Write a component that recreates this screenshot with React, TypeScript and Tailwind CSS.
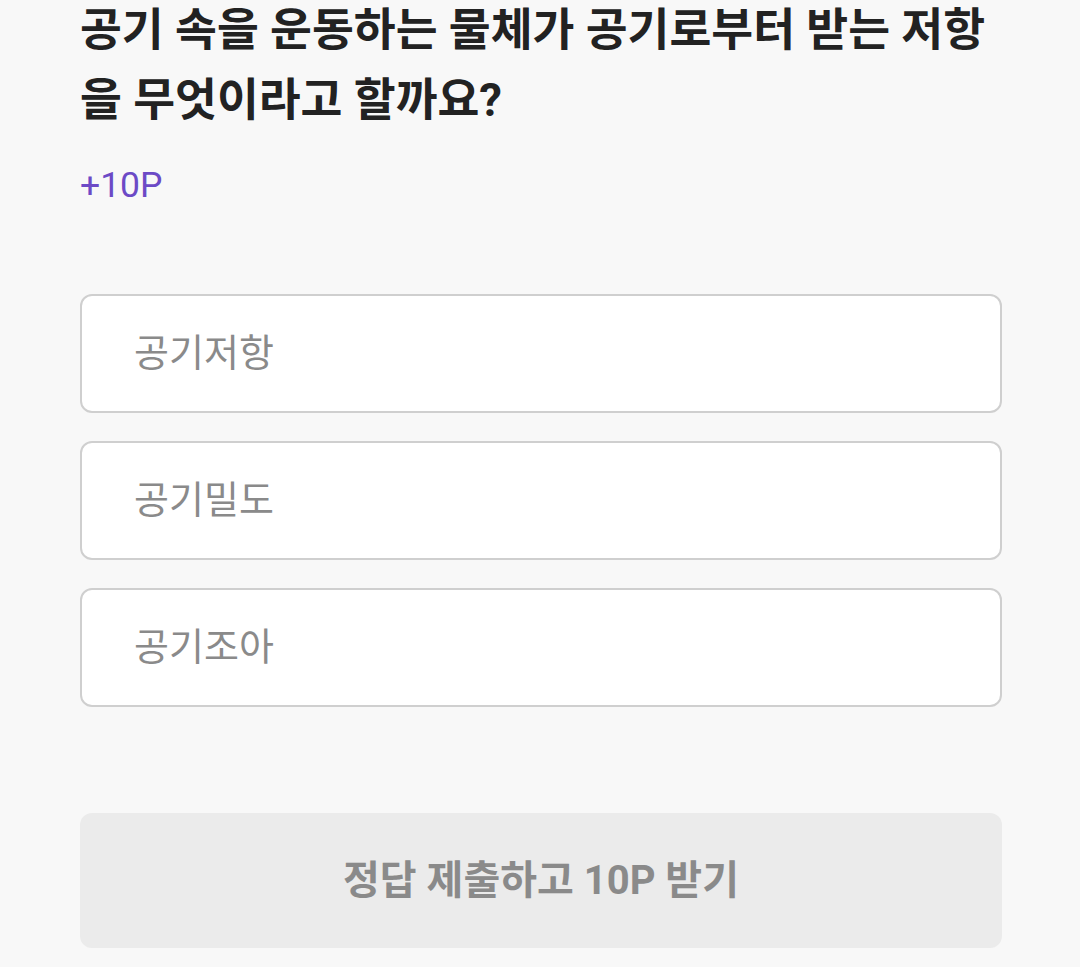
import { useState } from 'react';

const options = ['공기저항', '공기밀도', '공기조아'];

export default function App() {
  const [selected, setSelected] = useState<number | null>(null);

  return (
    <div
      className="min-h-screen w-full bg-[#f8f8f8] pl-[80px] pr-[78px] pb-5"
      style={{ fontFamily: 'Roboto, "Noto Sans CJK KR", sans-serif' }}
    >
      {/* Question */}
      <h1 className="-mt-[4px] text-[45.5px] font-bold leading-[70px] text-[#222222]">
        공기 속을 운동하는 물체가 공기로부터 받는 저항을 무엇이라고 할까요?
      </h1>
      <p className="mt-[25px] text-[35.5px] leading-[48px] text-[#6c4ac6]">+10P</p>

      {/* Choices */}
      <div className="mt-[85px] flex flex-col gap-[28px]">
        {options.map((opt, i) => (
          <button
            key={opt}
            type="button"
            onClick={() => setSelected(i)}
            className={`flex h-[119px] items-center rounded-[12px] border-2 bg-white px-[52px] text-left text-[38px] text-[#8a8a8a] ${
              selected === i ? 'border-[#6c4ac6]' : 'border-[#cfcfcf]'
            }`}
          >
            {opt}
          </button>
        ))}
      </div>

      {/* Submit */}
      <button
        type="button"
        className="mt-[106px] flex h-[135px] w-full items-center justify-center rounded-[12px] bg-[#ebebeb] text-[40px] font-bold text-[#8a8a8a]"
      >
        정답 제출하고 10P 받기
      </button>
    </div>
  );
}
